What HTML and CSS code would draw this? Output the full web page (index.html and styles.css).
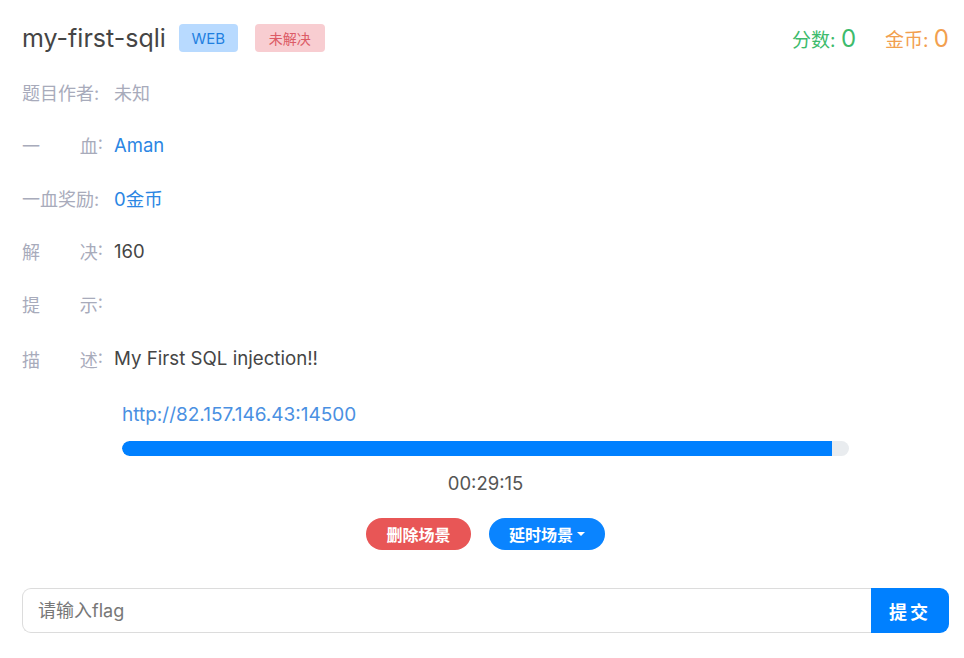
FILE: index.html
```html
<!DOCTYPE html>
<html lang="zh">
<head>
<meta charset="utf-8">
<title>my-first-sqli</title>
<link rel="stylesheet" href="styles.css">
</head>
<body>
<div class="page">
  <div class="header">
    <div class="title-group">
      <h1 class="title">my-first-sqli</h1>
      <span class="badge badge-web">WEB</span>
      <span class="badge badge-unsolved">未解决</span>
    </div>
    <div class="stats">
      <span class="stat stat-score">分数: <b>0</b></span>
      <span class="stat stat-coin">金币: <b>0</b></span>
    </div>
  </div>

  <div class="info">
    <div class="row"><span class="label">题目作者:</span><span class="value muted">未知</span></div>
    <div class="row"><span class="label"><span class="lt"><span>一</span><span>血</span></span>:</span><span class="value link">Aman</span></div>
    <div class="row"><span class="label">一血奖励:</span><span class="value link">0金币</span></div>
    <div class="row"><span class="label"><span class="lt"><span>解</span><span>决</span></span>:</span><span class="value">160</span></div>
    <div class="row"><span class="label"><span class="lt"><span>提</span><span>示</span></span>:</span><span class="value"></span></div>
    <div class="row"><span class="label"><span class="lt"><span>描</span><span>述</span></span>:</span><span class="value desc">My First SQL injection!!</span></div>
  </div>

  <div class="scene">
    <a class="url" href="#">http://82.157.146.43:14500</a>
    <div class="progress"><div class="progress-fill" style="width: 97.7%"></div></div>
    <div class="timer">00:29:15</div>
    <div class="actions">
      <button class="btn btn-danger">删除场景</button>
      <button class="btn btn-primary">延时场景<span class="caret"></span></button>
    </div>
  </div>

  <form class="flag-form" onsubmit="return false">
    <input class="flag-input" type="text" placeholder="请输入flag">
    <button class="flag-submit" type="submit">提交</button>
  </form>
</div>
</body>
</html>
```

FILE: styles.css
```css
* { box-sizing: border-box; }
html, body { margin: 0; padding: 0; background: #fff; }
body {
  font-family: Inter, "Noto Sans CJK SC", sans-serif;
  color: #4a4a4a;
}
.page {
  padding: 24px 15px 0 22px;
}
.header {
  display: flex;
  justify-content: space-between;
  align-items: center;
  height: 28px;
}
.title-group {
  display: flex;
  align-items: center;
}
.title {
  margin: 0 13px 0 0;
  font-size: 25px;
  font-weight: 400;
  line-height: 28px;
  color: #454545;
}
.badge {
  display: inline-flex;
  align-items: center;
  justify-content: center;
  height: 28px;
  border-radius: 4px;
  font-size: 15px;
}
.badge-web {
  width: 59px;
  background: #b8daff;
  color: #1f7fe0;
  margin-right: 17px;
}
.badge-unsolved {
  width: 70px;
  background: #f8cdd1;
  color: #dc5b66;
  font-size: 14px;
}
.stats {
  display: flex;
  gap: 29px;
  align-items: baseline;
}
.stat { font-size: 19px; }
.stat b { font-weight: 400; font-size: 24px; }
.stat-score { color: #3dbb6c; }
.stat-coin { color: #f2a04f; }

.info {
  margin-top: 13px;
}
.row {
  display: flex;
  align-items: center;
  height: 53px;
  font-size: 18px;
}
.row:last-child { padding-top: 4px; }
.label {
  width: 81px;
  color: #a8abbb;
  display: flex;
  justify-content: space-between;
  white-space: nowrap;
}
.label .lt {
  flex: 1;
  display: flex;
  justify-content: space-between;
}
.value {
  margin-left: 11px;
  color: #454545;
  font-size: 18.5px;
}
.value.muted { color: #a8abbb; font-size: 18px; }
.value.link { color: #2b86e3; }
.value.desc { font-size: 18.7px; }

.scene {
  padding: 0 100px;
  display: flex;
  flex-direction: column;
  margin-top: 18px;
}
.url {
  font-size: 19px;
  color: #4a90e2;
  text-decoration: none;
  line-height: 27px;
}
.progress {
  margin-top: 13px;
  height: 15px;
  border-radius: 8px;
  background: #e9ecef;
  overflow: hidden;
}
.progress-fill {
  height: 100%;
  background: #0080ff;
  border-radius: 8px 0 0 8px;
}
.timer {
  text-align: center;
  font-size: 18.5px;
  color: #555;
  margin-top: 14px;
  line-height: 27px;
}
.actions {
  display: flex;
  justify-content: center;
  gap: 18px;
  margin-top: 21px;
}
.btn {
  height: 32px;
  border: none;
  border-radius: 16px;
  color: #fff;
  font-family: inherit;
  font-size: 16px;
  font-weight: 700;
  padding: 0;
  display: inline-flex;
  align-items: center;
  justify-content: center;
  cursor: pointer;
}
.btn-danger { background: #e85656; width: 105px; }
.btn-primary { background: #0a84ff; width: 116px; }
.caret {
  display: inline-block;
  margin-left: 4px;
  border-top: 4px solid #fff;
  border-left: 4px solid transparent;
  border-right: 4px solid transparent;
}

.flag-form {
  display: flex;
  margin-top: 38px;
  height: 45px;
}
.flag-input {
  flex: 1;
  height: 45px;
  border: 1px solid #dcdcdc;
  border-right: none;
  border-radius: 9px 0 0 9px;
  padding: 0 15px;
  font-family: inherit;
  font-size: 18px;
  color: #454545;
  outline: none;
}
.flag-input::placeholder { color: #777; }
.flag-submit {
  width: 78px;
  height: 45px;
  border: none;
  background: #0080ff;
  color: #fff;
  font-family: inherit;
  font-size: 18px;
  font-weight: 700;
  letter-spacing: 3px;
  padding-left: 6px;
  border-radius: 0 9px 9px 0;
}
```
